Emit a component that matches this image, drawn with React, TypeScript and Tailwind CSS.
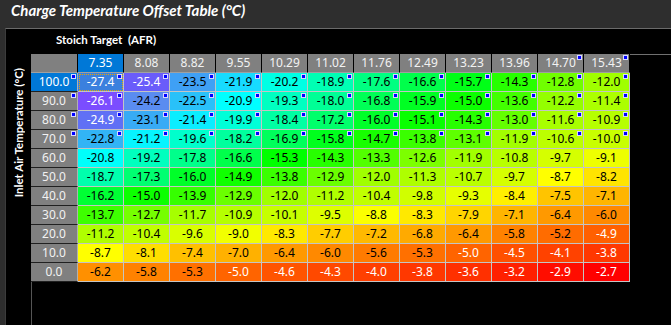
import React from 'react';

const cols = ['7.35', '8.08', '8.82', '9.55', '10.29', '11.02', '11.76', '12.49', '13.23', '13.96', '14.70', '15.43'];

const rows: [string, number[]][] = [
  ['100.0', [-27.4, -25.4, -23.5, -21.9, -20.2, -18.9, -17.6, -16.6, -15.7, -14.3, -12.8, -12.0]],
  ['90.0', [-26.1, -24.2, -22.5, -20.9, -19.3, -18.0, -16.8, -15.9, -15.0, -13.6, -12.2, -11.4]],
  ['80.0', [-24.9, -23.1, -21.4, -19.9, -18.4, -17.2, -16.0, -15.1, -14.3, -13.0, -11.6, -10.9]],
  ['70.0', [-22.8, -21.2, -19.6, -18.2, -16.9, -15.8, -14.7, -13.8, -13.1, -11.9, -10.6, -10.0]],
  ['60.0', [-20.8, -19.2, -17.8, -16.6, -15.3, -14.3, -13.3, -12.6, -11.9, -10.8, -9.7, -9.1]],
  ['50.0', [-18.7, -17.3, -16.0, -14.9, -13.8, -12.9, -12.0, -11.3, -10.7, -9.7, -8.7, -8.2]],
  ['40.0', [-16.2, -15.0, -13.9, -12.9, -12.0, -11.2, -10.4, -9.8, -9.3, -8.4, -7.5, -7.1]],
  ['30.0', [-13.7, -12.7, -11.7, -10.9, -10.1, -9.5, -8.8, -8.3, -7.9, -7.1, -6.4, -6.0]],
  ['20.0', [-11.2, -10.4, -9.6, -9.0, -8.3, -7.7, -7.2, -6.8, -6.4, -5.8, -5.2, -4.9]],
  ['10.0', [-8.7, -8.1, -7.4, -7.0, -6.4, -6.0, -5.6, -5.3, -5.0, -4.5, -4.1, -3.8]],
  ['0.0', [-6.2, -5.8, -5.3, -5.0, -4.6, -4.3, -4.0, -3.8, -3.6, -3.2, -2.9, -2.7]],
];

// value -> rgb stops, read off the screenshot
const stops: [number, number[]][] = [
  [-27.4, [128, 64, 255]],
  [-26.1, [123, 77, 255]],
  [-25.4, [106, 92, 250]],
  [-24.9, [96, 112, 245]],
  [-24.2, [90, 140, 240]],
  [-23.5, [63, 160, 245]],
  [-22.8, [50, 180, 245]],
  [-22.0, [25, 215, 255]],
  [-20.9, [0, 255, 255]],
  [-19.5, [0, 255, 200]],
  [-18.0, [0, 255, 150]],
  [-16.5, [0, 255, 70]],
  [-15.3, [0, 255, 0]],
  [-13.5, [70, 255, 0]],
  [-12.0, [160, 255, 0]],
  [-10.0, [200, 255, 0]],
  [-8.7, [255, 255, 0]],
  [-8.1, [255, 222, 0]],
  [-7.4, [255, 192, 0]],
  [-6.8, [255, 170, 0]],
  [-6.2, [255, 144, 0]],
  [-5.3, [255, 112, 0]],
  [-4.5, [255, 80, 0]],
  [-3.8, [255, 56, 0]],
  [-3.2, [255, 32, 0]],
  [-2.7, [255, 0, 0]],
];

function heat(v: number) {
  for (let i = 0; i < stops.length - 1; i++) {
    const [a, ca] = stops[i];
    const [b, cb] = stops[i + 1];
    if (v >= a && v <= b) {
      const t = (v - a) / (b - a);
      const c = ca.map((x, k) => Math.round(x + (cb[k] - x) * t));
      return `rgb(${c[0]},${c[1]},${c[2]})`;
    }
  }
  return v < stops[0][0] ? 'rgb(128,64,255)' : 'rgb(255,0,0)';
}

const Marker = () => (
  <span className="absolute top-[1px] right-[1px] w-[5px] h-[5px] bg-[#0000ff] border border-[#d8d8ff]" />
);

export default function App() {
  return (
    <div className="w-[671px] h-[325px] bg-black flex flex-col overflow-hidden" style={{ fontFamily: '"Noto Sans", "Open Sans", sans-serif' }}>
      <div className="h-[28px] shrink-0 bg-[#2e2e2e] pl-[11px] pt-[1px] text-[15px] leading-[18px] font-bold italic text-white font-['Lato',sans-serif]">
        Charge Temperature Offset Table (°C)
      </div>
      <div className="flex-1 flex bg-[#2e2e2e] pl-[5px]">
        <div className="flex-1 flex flex-col bg-black border-l border-t border-l-[#3c3c3c] border-t-[#6b6b6b]">
          <div className="h-[25px] shrink-0 pl-[50px] pt-[4px] text-[11.5px] leading-[14px] font-bold text-white font-['Lato',sans-serif]">
            Stoich Target&nbsp; (AFR)
          </div>
          <div className="flex-1 flex">
            <div className="w-[25px] shrink-0 flex justify-center pt-[14px]">
              <div className="[writing-mode:vertical-rl] rotate-180 text-[11.5px] leading-[13px] font-bold text-white whitespace-nowrap h-fit font-['Lato',sans-serif]">
                Inlet Air Temperature (°C)
              </div>
            </div>
            <div className="flex-1 border-l border-t border-l-[#555555] border-t-[#707070]">
              <div className="grid grid-cols-[47px_repeat(12,46px)] auto-rows-[19px] -ml-px -mt-px text-[12px] leading-[18px] text-center">
                <div className="bg-[#808080] border-r border-b border-r-black border-b-[#a0a0a0]" />
                {cols.map((c, i) => (
                  <div
                    key={c}
                    className={`relative border-r border-b border-r-black border-b-[#a0a0a0] ${i === 0 ? 'bg-[#0078d7] text-white' : 'bg-[#808080] text-[#f2f2f2]'}`}
                  >
                    {c}
                    {i >= 10 && <Marker />}
                  </div>
                ))}
                {rows.map(([label, vals], r) => (
                  <React.Fragment key={label}>
                    <div
                      className={`relative border-r border-b border-r-[#b0b0b0] border-b-[#202020] ${r === 0 ? 'bg-[#0078d7] text-white' : 'bg-[#808080] text-[#f2f2f2]'}`}
                    >
                      {label}
                      {r < 4 && <Marker />}
                    </div>
                    {vals.map((v, c) => {
                      const sel = r === 0 && c === 0;
                      const white = v <= -24.5 || v >= -5.0;
                      return (
                        <div
                          key={c}
                          className={`relative border-r border-b border-[#c4c4c4] ${white ? 'text-white' : 'text-black'} ${sel ? 'outline outline-1 outline-dotted outline-[#e8a800] -outline-offset-2' : ''}`}
                          style={{ backgroundColor: sel ? '#3b80de' : heat(v) }}
                        >
                          {v.toFixed(1)}
                          {r < 4 && <Marker />}
                        </div>
                      );
                    })}
                  </React.Fragment>
                ))}
              </div>
            </div>
          </div>
        </div>
      </div>
    </div>
  );
}
